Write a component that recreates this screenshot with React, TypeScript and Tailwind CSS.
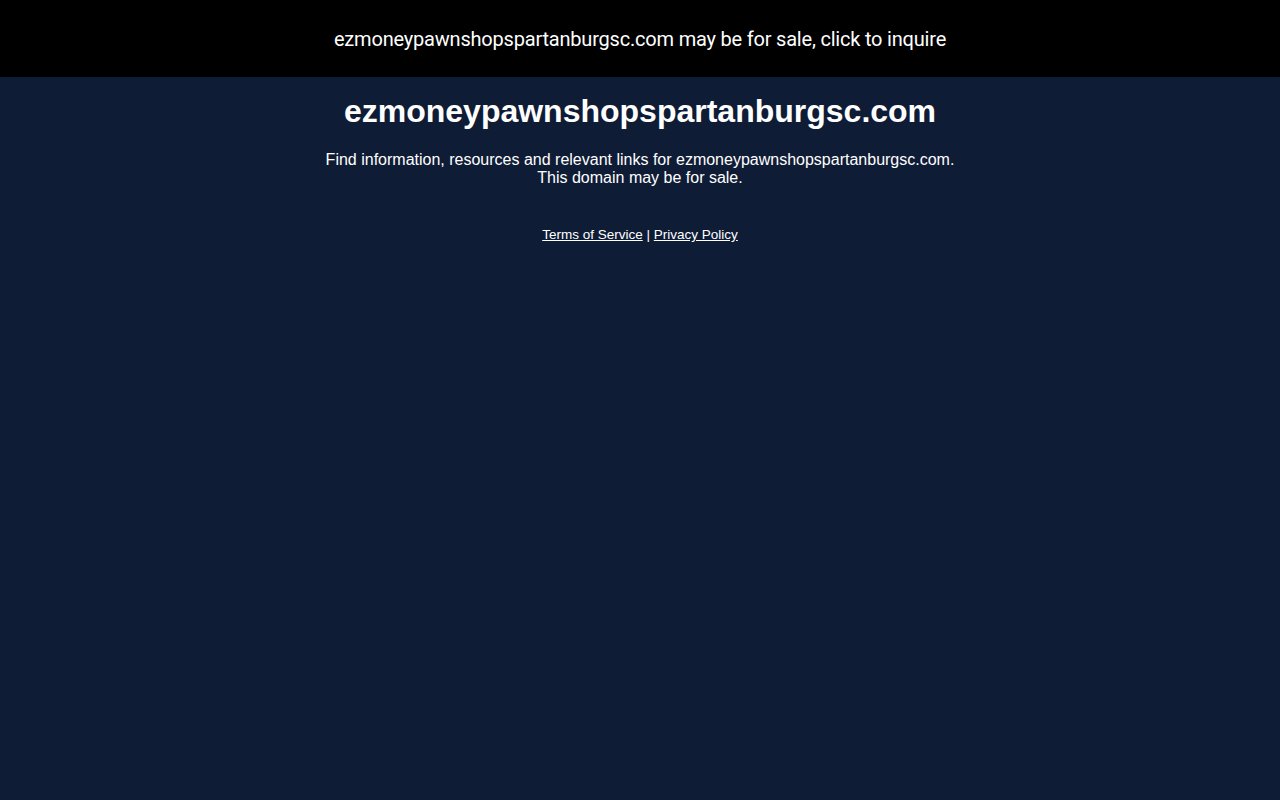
export default function App() {
  return (
    <div className="min-h-screen bg-[#0f1c36] text-white" style={{ fontFamily: '"Liberation Sans", Arial, sans-serif' }}>
      {/* Sale banner */}
      <div className="h-[77px] bg-black flex items-center justify-center">
        <a
          href="#"
          className="text-[20px] tracking-[-0.2px] text-white"
          style={{ fontFamily: 'Roboto, "Liberation Sans", sans-serif' }}
        >
          ezmoneypawnshopspartanburgsc.com may be for sale, click to inquire
        </a>
      </div>

      {/* Content */}
      <div className="flex flex-col items-center text-center">
        <h1 className="mt-[16px] text-[32px] font-bold leading-[37px]">ezmoneypawnshopspartanburgsc.com</h1>
        <p className="mt-[21px] text-[16px] leading-[18px]">
          Find information, resources and relevant links for ezmoneypawnshopspartanburgsc.com.
          <br />
          This domain may be for sale.
        </p>
        <div className="mt-[40px] text-[13.5px] leading-[15px]">
          <a href="#" className="underline">Terms of Service</a> |{" "}
          <a href="#" className="underline">Privacy Policy</a>
        </div>
      </div>
    </div>
  );
}
